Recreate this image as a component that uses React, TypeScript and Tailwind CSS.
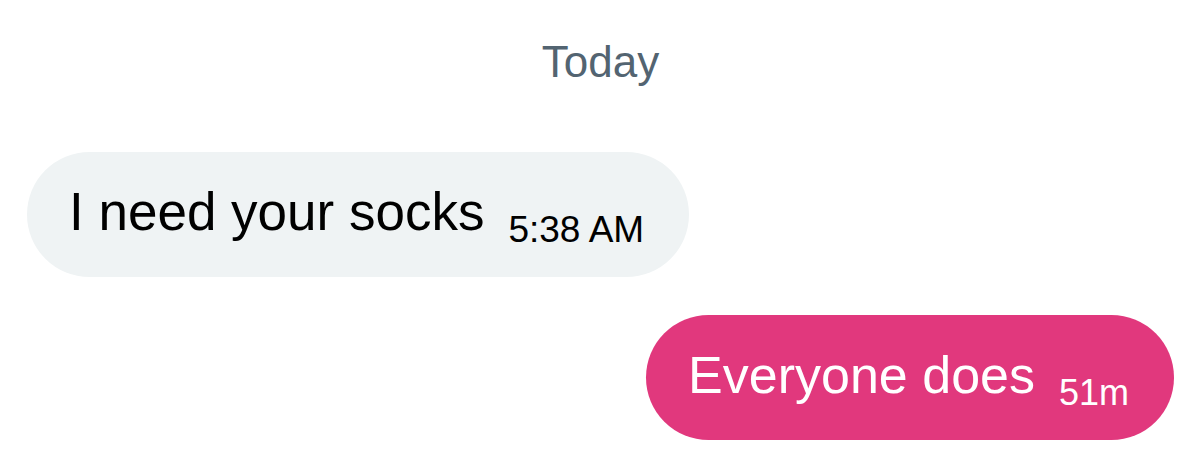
import React from 'react'

interface MsgProps {
  text: string
  time: string
  mine?: boolean
}

const Bubble: React.FC<MsgProps> = ({ text, time, mine }) => {
  return (
    <div className={mine ? 'flex justify-end' : 'flex justify-start'}>
      <div
        className={
          'flex items-center h-[125px] pl-[42px] pr-[45px] rounded-full ' +
          (mine ? 'bg-[#e1387d] text-white' : 'bg-[#eff3f4] text-black')
        }
      >
        <p className="leading-none whitespace-nowrap pt-[4px]">
          <span className={mine ? 'text-[52px]' : 'text-[53px]'}>{text}</span>
          <span className={(mine ? 'text-[36px]' : 'text-[37px]') + ' ml-[24px] align-[-12px]'}>{time}</span>
        </p>
      </div>
    </div>
  )
}

export default function App() {
  return (
    <div className="w-[1200px] h-[453px] bg-white overflow-hidden pt-[40px] pl-[27px] pr-[26px] font-['Liberation_Sans',Arial,sans-serif]">
      <div className="text-center text-[44px] leading-none text-[#536471]">Today</div>
      <div className="mt-[68px] flex flex-col gap-[38px]">
        <Bubble text="I need your socks" time="5:38 AM" />
        <Bubble text="Everyone does" time="51m" mine />
      </div>
    </div>
  )
}
